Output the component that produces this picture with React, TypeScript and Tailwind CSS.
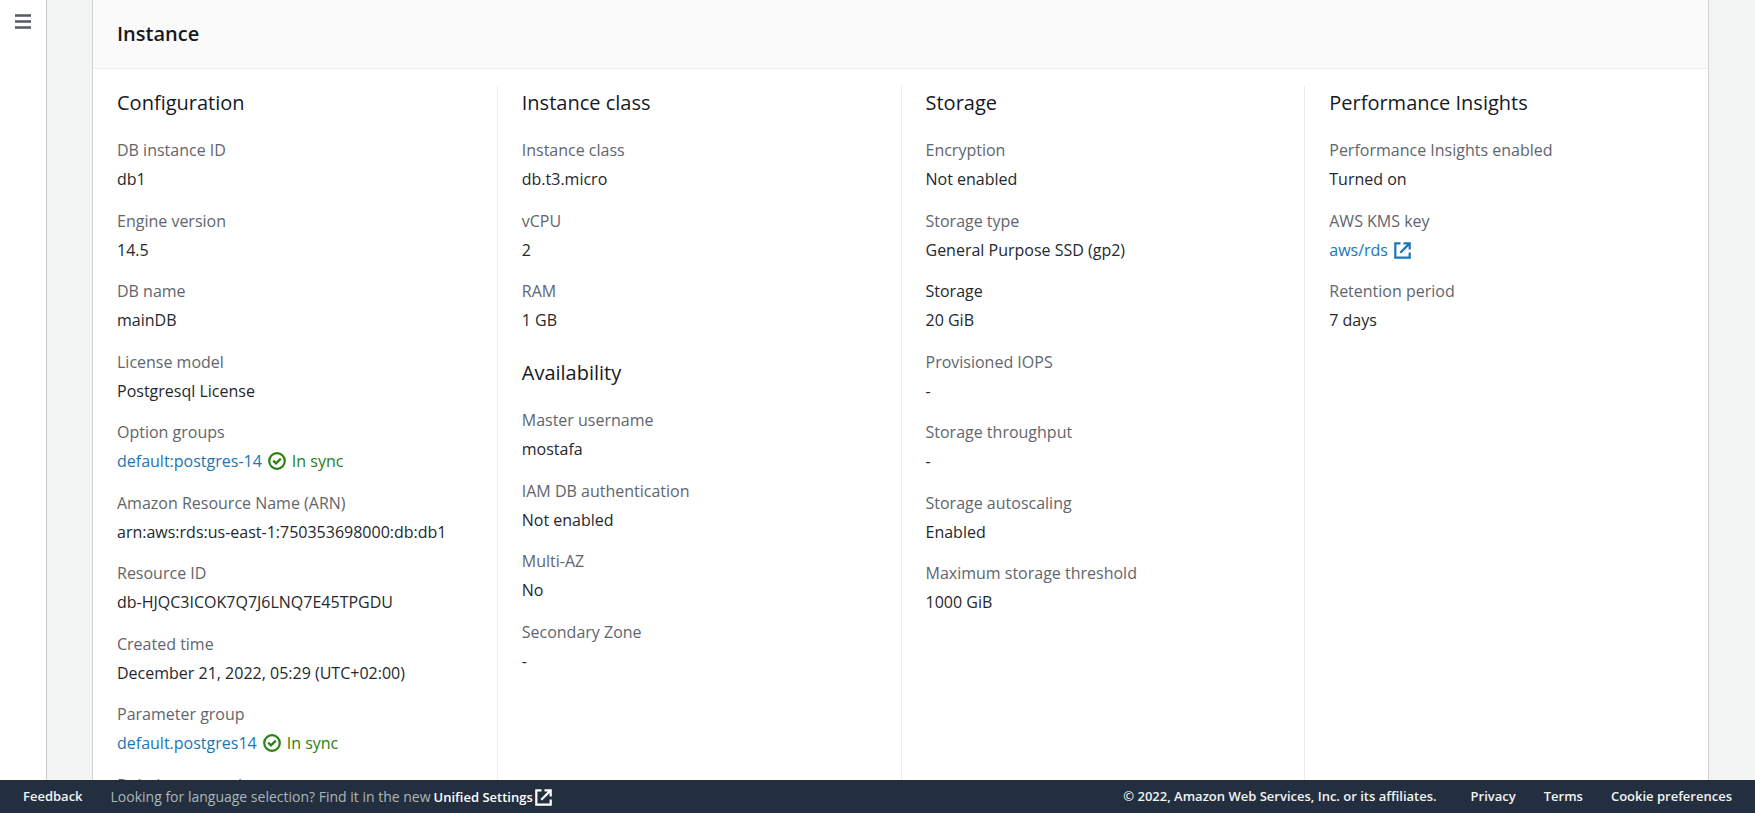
import type { ReactNode } from "react";

type Field = { label: string; value: ReactNode; strong?: boolean };

function ExternalIcon({ className = "" }: { className?: string }) {
  return (
    <svg viewBox="0 0 17 17" className={className} fill="none" stroke="currentColor" strokeWidth="2.2" aria-hidden="true">
      <path d="M6.500 1.300H1.300v14.400h14.400v-5.200" />
      <path d="M9.500 1.300h6.200v6.200M15.400 1.600 6.300 10.700" />
    </svg>
  );
}

function InSync() {
  return (
    <span className="flex items-center gap-1.5 text-[#2a8012]">
      <svg viewBox="0 0 18 18" className="size-[18px]" fill="none" stroke="currentColor" strokeWidth="2.2" aria-hidden="true">
        <circle cx="9" cy="9" r="7.800" />
        <path d="M5.200 8.600 8 11.400l4.800-4.800" />
      </svg>
      In sync
    </span>
  );
}

function Group({ title, fields }: { title: string; fields: Field[] }) {
  return (
    <section>
      <h3 className="text-xl leading-8 text-[#16191f]">{title}</h3>
      <dl className="mt-5 flex flex-col gap-4.5">
        {fields.map((f) => (
          <div key={f.label} className="flex flex-col gap-1.5 odd:pb-px">
            <dt className={f.strong ? "leading-snug text-[#25282d]" : "leading-snug text-[#5f666d]"}>{f.label}</dt>
            <dd className="flex h-6 items-center gap-1.5 whitespace-nowrap leading-6 text-[#25282d]">{f.value}</dd>
          </div>
        ))}
      </dl>
    </section>
  );
}

const link = "text-[#1a76b8]";

const configuration: Field[] = [
  { label: "DB instance ID", value: "db1" },
  { label: "Engine version", value: "14.5" },
  { label: "DB name", value: "mainDB" },
  { label: "License model", value: "Postgresql License" },
  { label: "Option groups", value: <><a href="#option-group" className={link}>default:postgres-14</a><InSync /></> },
  { label: "Amazon Resource Name (ARN)", value: "arn:aws:rds:us-east-1:750353698000:db:db1" },
  { label: "Resource ID", value: "db-HJQC3ICOK7Q7J6LNQ7E45TPGDU" },
  { label: "Created time", value: "December 21, 2022, 05:29 (UTC+02:00)" },
  { label: "Parameter group", value: <><a href="#parameter-group" className={link}>default.postgres14</a><InSync /></> },
  { label: "Deletion protection", value: "" },
];

const instanceClass: Field[] = [
  { label: "Instance class", value: "db.t3.micro" },
  { label: "vCPU", value: "2" },
  { label: "RAM", value: "1 GB" },
];

const availability: Field[] = [
  { label: "Master username", value: "mostafa" },
  { label: "IAM DB authentication", value: "Not enabled" },
  { label: "Multi-AZ", value: "No" },
  { label: "Secondary Zone", value: "-" },
];

const storage: Field[] = [
  { label: "Encryption", value: "Not enabled" },
  { label: "Storage type", value: "General Purpose SSD (gp2)" },
  { label: "Storage", value: "20 GiB", strong: true },
  { label: "Provisioned IOPS", value: "-" },
  { label: "Storage throughput", value: "-" },
  { label: "Storage autoscaling", value: "Enabled" },
  { label: "Maximum storage threshold", value: "1000 GiB" },
];

const insights: Field[] = [
  { label: "Performance Insights enabled", value: "Turned on" },
  {
    label: "AWS KMS key",
    value: <a href="#kms-key" className="flex items-center gap-1.5 text-[#1a76b8]">aws/rds<ExternalIcon className="size-[17px]" /></a>,
  },
  { label: "Retention period", value: "7 days" },
];

export default function App() {
  return (
    <div className="flex h-screen flex-col overflow-hidden bg-[#f2f3f3] font-['Open_Sans',sans-serif] text-base text-[#16191f]">
      <div className="flex min-h-0 flex-1 overflow-hidden">
        <nav className="w-[47px] shrink-0 border-r border-[#c9cccc] bg-white" aria-label="Services">
          <button type="button" aria-label="Open navigation" className="ml-[15px] mt-3.5 block text-[#545b64]">
            <svg viewBox="0 0 16 15" className="h-[15px] w-4" fill="none" stroke="currentColor" strokeWidth="2.4" aria-hidden="true">
              <path d="M0 1.500h16M0 7.500h16M0 13.500h16" />
            </svg>
          </button>
        </nav>
        <main className="min-w-0 flex-1 overflow-hidden pl-[45px] pr-[46px]">
          <div className="border-x border-[#d0d3d3] bg-white">
            <header className="border-b border-[#eaeded] bg-[#fafafa] px-6 py-[18px]">
              <h2 className="text-xl font-semibold leading-8">Instance</h2>
            </header>
            <div className="grid grid-cols-4 pt-[17px]">
              <div className="pl-6 pt-px"><Group title="Configuration" fields={configuration} /></div>
              <div className="flex flex-col gap-6 border-l border-[#eaeded] pl-6 pt-px">
                <Group title="Instance class" fields={instanceClass} />
                <Group title="Availability" fields={availability} />
              </div>
              <div className="border-l border-[#eaeded] pl-6 pt-px"><Group title="Storage" fields={storage} /></div>
              <div className="border-l border-[#eaeded] pl-6 pt-px"><Group title="Performance Insights" fields={insights} /></div>
            </div>
          </div>
        </main>
      </div>
      <footer className="flex h-[33px] shrink-0 items-center justify-between whitespace-nowrap bg-[#232f3e] px-[23px] pt-px text-[13px] font-semibold text-[#f2f3f3]">
        <div className="flex items-center gap-7">
          <button type="button">Feedback</button>
          <p className="flex items-center gap-[3px] text-sm font-normal text-[#aab7b8]">
            Looking for language selection? Find it in the new
            <a href="#settings" className="flex items-center gap-0.5 text-[13px] font-semibold text-white">Unified Settings<ExternalIcon className="size-[17px]" /></a>
          </p>
        </div>
        <div className="flex items-center gap-7">
          <span className="mr-1.5">© 2022, Amazon Web Services, Inc. or its affiliates.</span>
          <a href="#privacy">Privacy</a>
          <a href="#terms">Terms</a>
          <a href="#cookies">Cookie preferences</a>
        </div>
      </footer>
    </div>
  );
}
